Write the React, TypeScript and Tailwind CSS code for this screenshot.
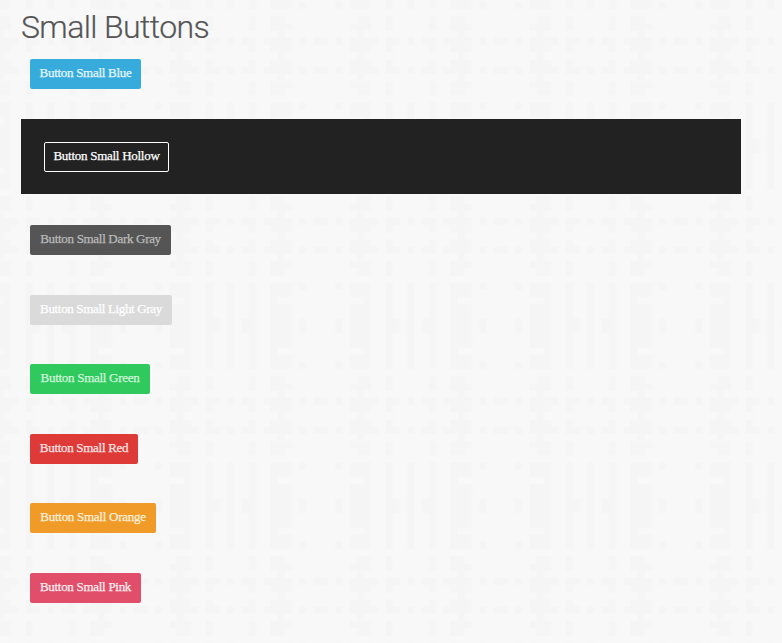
type Cell = [x: number, y: number, width: number, height: number];

const crossRows: Cell[] = [16, 20].flatMap((y): Cell[] => [
  [0, y, 4, 1], [5, y, 2, 1], [8, y, 1, 1], [10, y, 2, 1],
  [13, y, 4, 1], [18, y, 1, 1], [20, y, 2, 1], [23, y, 1, 1],
]);

const blockRows: Cell[] = [14, 17, 19, 22].flatMap((y): Cell[] => [
  [0, y, 3, 1], [5, y, 1, 1], [11, y, 1, 1], [14, y, 3, 1],
]);

const narrowRows: Cell[] = [13, 23].flatMap((y): Cell[] => [
  [1, y, 2, 1], [5, y, 1, 1], [11, y, 1, 1], [14, y, 2, 1],
]);

const stemRows: Cell[] = [15, 18, 21].flatMap((y): Cell[] => [
  [1, y, 1, 1], [15, y, 1, 1],
]);

const weave: Cell[] = [
  [0, 0, 3, 2], [2, 2, 1, 1], [0, 3, 3, 6], [2, 9, 1, 1], [0, 10, 3, 2],
  [5, 0, 1, 12], [6, 5, 1, 2], [8, 0, 1, 12], [11, 0, 1, 12], [10, 5, 1, 2],
  [14, 0, 3, 2], [14, 2, 1, 1], [14, 3, 3, 6], [14, 9, 1, 1], [14, 10, 3, 2],
  [18, 0, 1, 1], [18, 5, 1, 2], [18, 11, 1, 1],
  [23, 0, 1, 1], [23, 5, 1, 2], [23, 11, 1, 1],
  ...narrowRows, ...blockRows, ...stemRows, ...crossRows,
];

function Backdrop() {
  return (
    <svg className="pointer-events-none absolute inset-0 -z-10 h-full w-full" aria-hidden="true">
      <defs>
        <pattern
          id="weave"
          width="25"
          height="25"
          patternUnits="userSpaceOnUse"
          patternTransform="translate(169.6 102.7) scale(7.2)"
        >
          {weave.map(([x, y, width, height]) => (
            <rect key={`${x}-${y}`} x={x} y={y} width={width} height={height} fill="#f5f5f5" />
          ))}
        </pattern>
      </defs>
      <rect width="100%" height="100%" fill="url(#weave)" />
    </svg>
  );
}

const base =
  "flex h-[30px] items-center justify-center rounded-[2px] pb-[3px] font-['Liberation_Serif',serif] text-[13px] leading-none whitespace-nowrap [-webkit-text-stroke:0.25px_currentColor]";

const buttons = [
  { label: 'Button Small Dark Gray', style: 'w-[141px] bg-[#555555] text-[#bbbbbb] tracking-[-0.31px]' },
  { label: 'Button Small Light Gray', style: 'w-[142px] bg-[#dadada] text-white tracking-[-0.34px]' },
  { label: 'Button Small Green', style: 'w-[120px] bg-[#30c95e] text-[#d0f5dc] tracking-[-0.28px]' },
  { label: 'Button Small Red', style: 'w-[108px] bg-[#dd3a38] text-[#fbe5e5] tracking-[-0.3px]' },
  { label: 'Button Small Orange', style: 'w-[126px] bg-[#f09b28] text-[#fdf0dd] tracking-[-0.27px]' },
  { label: 'Button Small Pink', style: 'w-[111px] bg-[#e14e6a] text-[#fdeef1] tracking-[-0.29px]' },
];

export default function App() {
  return (
    <main className="relative isolate h-[643px] w-[782px] overflow-hidden bg-[#f8f8f8] pl-[21px]">
      <Backdrop />
      <h1 className="h-[59px] pt-[7px] font-['Roboto',sans-serif] text-[32px] leading-[40px] font-light tracking-[-0.6px] text-[#555555] [-webkit-text-stroke:0.2px_currentColor]">
        Small Buttons
      </h1>
      <button className={`${base} ml-[9px] w-[111px] bg-[#37acdc] tracking-[-0.29px] text-[#e6f6fc]`}>
        Button Small Blue
      </button>
      <section className="mt-[30px] flex h-[75px] w-[720px] items-center bg-[#222222] pl-[23px]">
        <button className={`${base} mt-[1px] w-[125px] border border-white tracking-[-0.27px] text-white`}>
          Button Small Hollow
        </button>
      </section>
      <div className="mt-[31px] ml-[9px] flex flex-col gap-[39.6px]">
        {buttons.map(({ label, style }) => (
          <button key={label} className={`${base} ${style}`}>
            {label}
          </button>
        ))}
      </div>
    </main>
  );
}
